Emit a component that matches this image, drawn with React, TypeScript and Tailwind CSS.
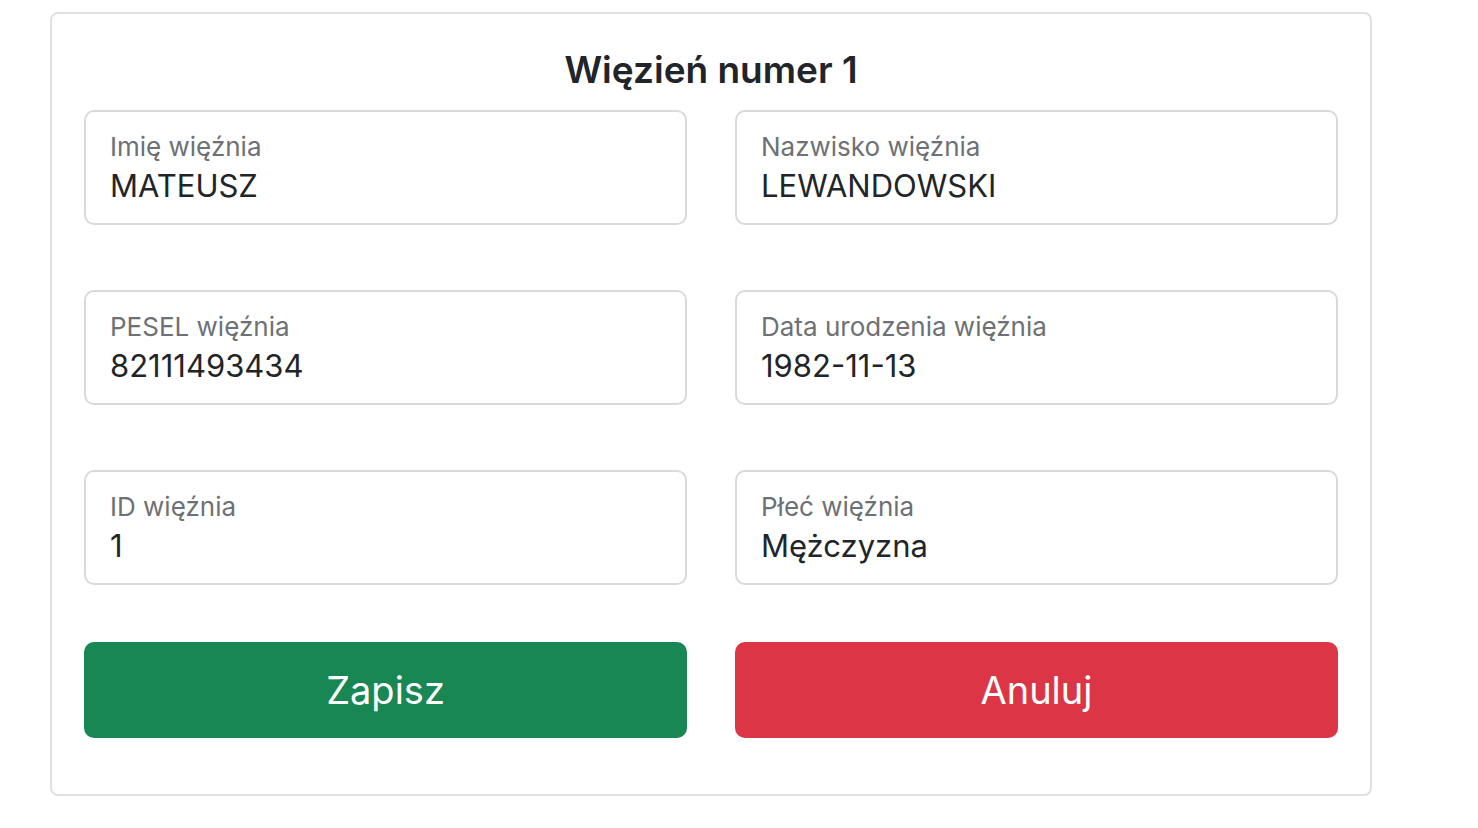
import { FC } from 'react'

type Field = { label: string; value: string }

const fields: Field[] = [
	{ label: 'Imię więźnia', value: 'MATEUSZ' },
	{ label: 'Nazwisko więźnia', value: 'LEWANDOWSKI' },
	{ label: 'PESEL więźnia', value: '82111493434' },
	{ label: 'Data urodzenia więźnia', value: '1982-11-13' },
	{ label: 'ID więźnia', value: '1' },
	{ label: 'Płeć więźnia', value: 'Mężczyzna' },
]

const FloatingField: FC<Field> = ({ label, value }) => {
	return (
		<div className="h-[115px] border-2 border-[#d7dadd] rounded-[10px] bg-white px-[24px] pt-[18px]">
			<div className="text-[26px] leading-[34px] text-[#6d7175]">{label}</div>
			<div className="text-[31px] leading-[42px] text-[#212529] mt-[1px]">{value}</div>
		</div>
	)
}

const App: FC = () => {
	return (
		<div className="min-h-screen bg-white font-['Inter','Liberation_Sans',sans-serif]">
			<div className="ml-[50px] mt-[12px] w-[1322px] border-2 border-[#e0e0e0] rounded-[8px] px-[32px] pt-[34px] pb-[56px]">
				<h2 className="text-center text-[37px] leading-[44px] font-semibold text-[#212529] mb-[18px]">
					Więzień numer 1
				</h2>
				<div className="grid grid-cols-[603px_603px] gap-x-[48px] gap-y-[65px]">
					{fields.map((f) => (
						<FloatingField key={f.label} label={f.label} value={f.value} />
					))}
				</div>
				<div className="grid grid-cols-[603px_603px] gap-x-[48px] mt-[57px]">
					<button className="h-[96px] rounded-[10px] bg-[#198754] text-white text-[38px]">
						Zapisz
					</button>
					<button className="h-[96px] rounded-[10px] bg-[#dc3545] text-white text-[38px]">
						Anuluj
					</button>
				</div>
			</div>
		</div>
	)
}

export default App
